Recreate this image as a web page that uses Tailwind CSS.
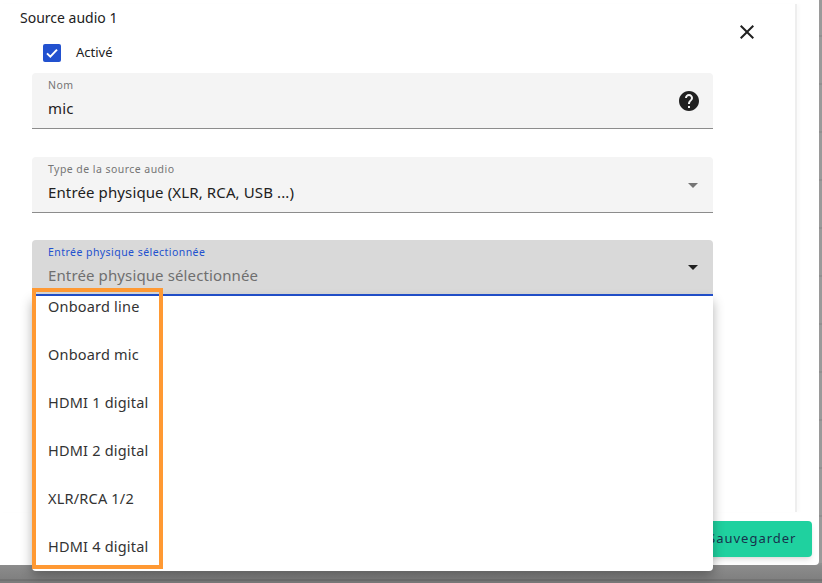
<!DOCTYPE html>
<html lang="en">
<head>
    <meta charset="UTF-8" />
    <script src="https://cdn.jsdelivr.net/npm/@tailwindcss/browser@4"></script>
    <title>Source audio</title>
</head>
<body class="relative h-[583px] w-[822px] overflow-hidden bg-[#8e8e8e] font-['Noto_Sans',sans-serif] text-[#212121]">

    <!-- page behind the dialog -->
    <div class="absolute inset-x-0 bottom-0 h-[18px] bg-[linear-gradient(to_bottom,#8c8c8c_0,#808080_14px,#666666_15px,#7c7c7c_16px)]"></div>
    <div class="absolute right-0 top-0 h-[565px] w-[3px] bg-[repeating-linear-gradient(to_bottom,#9a9a9a_0,#9a9a9a_35px,#858585_36px,#9a9a9a_37px,#9a9a9a_48px)]"></div>

    <div class="relative h-[565px] w-[819px] rounded-br bg-white">

        <!-- scrolling form area -->
        <div class="pt-[4px]">
            <div class="h-[508px] w-[797px] border-r-2 border-[#eeeeee] pl-[20px] pt-[5px] shadow-[3px_0_3px_rgba(0,0,0,0.02)]">
                <p class="text-[14px] leading-[18px]">Source audio 1</p>

                <div class="ml-[23px] mt-[8px] flex h-[36px] items-center gap-[15px]">
                    <span class="flex size-[18px] items-center justify-center rounded-[2px] bg-[#2251cf]">
                        <svg viewBox="0 0 24 24" class="size-[16px]" fill="none" stroke="#fff" stroke-width="3"><path d="M4.5 12.5 9.5 17.5 19.5 7" /></svg>
                    </span>
                    <span class="text-[13px]">Activé</span>
                </div>

                <div class="ml-[12px] mt-[2px] flex h-[56px] w-[681px] items-center justify-between rounded-t border-b border-[#8c8c8c] bg-[#f4f4f4] pl-[16px] pr-[12px]">
                    <div class="-mt-[4px]">
                        <p class="text-[10.5px] leading-[12px] tracking-[0.45px] text-[#757575]">Nom</p>
                        <p class="mt-[7px] text-[15px] leading-[20px] tracking-[0.12px]">mic</p>
                    </div>
                    <svg viewBox="0 0 24 24" class="size-[24px]" fill="#212121"><path d="M12 2C6.48 2 2 6.48 2 12s4.48 10 10 10 10-4.48 10-10S17.52 2 12 2zm1 17h-2v-2h2v2zm2.07-7.75-.9.92C13.45 12.9 13 13.5 13 15h-2v-.5c0-1.1.45-2.1 1.17-2.83l1.24-1.26c.37-.36.59-.86.59-1.41 0-1.1-.9-2-2-2s-2 .9-2 2H8c0-2.21 1.79-4 4-4s4 1.79 4 4c0 .88-.36 1.68-.93 2.25z" /></svg>
                </div>

                <div class="ml-[12px] mt-[28px] flex h-[56px] w-[681px] items-center justify-between rounded-t border-b border-[#8c8c8c] bg-[#f4f4f4] pl-[16px] pr-[15px]">
                    <div class="-mt-[4px]">
                        <p class="text-[10.5px] leading-[12px] tracking-[0.45px] text-[#757575]">Type de la source audio</p>
                        <p class="mt-[7px] text-[15px] leading-[20px] tracking-[0.12px]">Entrée physique (XLR, RCA, USB ...)</p>
                    </div>
                    <span class="mt-[1px] h-0 w-0 border-x-[5px] border-t-[5px] border-x-transparent border-t-[#757575]"></span>
                </div>

                <div class="ml-[12px] mt-[27px] flex h-[56px] w-[681px] items-center justify-between rounded-t border-b-2 border-[#2251cf] bg-[#d9d9d9] pl-[16px] pr-[15px]">
                    <div class="-mt-[4px]">
                        <p class="text-[10.5px] leading-[12px] tracking-[0.45px] text-[#2251cf]">Entrée physique sélectionnée</p>
                        <p class="mt-[7px] text-[15px] leading-[20px] tracking-[0.12px] text-[#6f6f6f]">Entrée physique sélectionnée</p>
                    </div>
                    <span class="h-0 w-0 border-x-[5px] border-t-[5px] border-x-transparent border-t-[#212121]"></span>
                </div>
            </div>
        </div>

        <!-- close -->
        <svg viewBox="0 0 24 24" class="absolute left-[735px] top-[20px] size-[24px]" fill="#212121"><path d="M19 6.41 17.59 5 12 10.59 6.41 5 5 6.41 10.59 12 5 17.59 6.41 19 12 13.41 17.59 19 19 17.59 13.41 12z" /></svg>

        <!-- footer -->
        <div class="flex justify-end pr-[7px] pt-[9px]">
            <button class="h-[36px] w-[120px] rounded bg-[#1fd19f] pl-[16px] text-left text-[13px] tracking-[1px] text-[#17324d] shadow-md">Sauvegarder</button>
        </div>
    </div>

    <!-- open select menu -->
    <ul class="absolute left-[32px] top-[296px] h-[275px] w-[681px] overflow-hidden rounded-b bg-white pl-[16px] text-[14.5px] leading-[48px] tracking-[0.2px] text-[#333333] shadow-[0_5px_12px_rgba(0,0,0,0.3)]">
        <li class="-mt-[14px]">Onboard line</li>
        <li>Onboard mic</li>
        <li>HDMI 1 digital</li>
        <li>HDMI 2 digital</li>
        <li>XLR/RCA 1/2</li>
        <li>HDMI 4 digital</li>
    </ul>

    <!-- annotation frame -->
    <div class="absolute left-[32px] top-[288px] h-[281px] w-[131px] border-[4px] border-[#ff9933]"></div>

</body>
</html>
